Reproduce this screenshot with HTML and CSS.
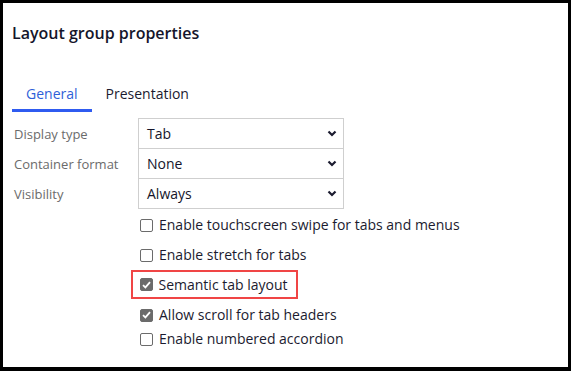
FILE: index.html
```html
<!DOCTYPE html>
<html>
<head>
<meta charset="utf-8">
<link rel="stylesheet" href="styles.css">
</head>
<body>
<div class="frame">
  <h1 class="title">Layout group properties</h1>
  <div class="tabs">
    <div class="tab active">General</div>
    <div class="tab">Presentation</div>
  </div>
  <div class="form">
    <div class="field">
      <div class="label">Display type</div>
      <div class="select"><span>Tab</span><svg class="chev" width="10" height="7" viewBox="0 0 10 7"><path d="M1.5 1.5 L5 5 L8.5 1.5" fill="none" stroke="#1b1b2f" stroke-width="2.2"/></svg></div>
    </div>
    <div class="field">
      <div class="label">Container format</div>
      <div class="select"><span>None</span><svg class="chev" width="10" height="7" viewBox="0 0 10 7"><path d="M1.5 1.5 L5 5 L8.5 1.5" fill="none" stroke="#1b1b2f" stroke-width="2.2"/></svg></div>
    </div>
    <div class="field">
      <div class="label">Visibility</div>
      <div class="select"><span>Always</span><svg class="chev" width="10" height="7" viewBox="0 0 10 7"><path d="M1.5 1.5 L5 5 L8.5 1.5" fill="none" stroke="#1b1b2f" stroke-width="2.2"/></svg></div>
    </div>
  </div>
  <div class="checks">
    <div class="check r1"><span class="box"></span><span>Enable touchscreen swipe for tabs and menus</span></div>
    <div class="check r2"><span class="box"></span><span>Enable stretch for tabs</span></div>
    <div class="check r3 highlight"><span class="box on"><svg width="9" height="8" viewBox="0 0 9 8"><path d="M1 4.2 L3.4 6.4 L8 1.2" fill="none" stroke="#fff" stroke-width="1.8"/></svg></span><span>Semantic tab layout</span></div>
    <div class="check r4"><span class="box on"><svg width="9" height="8" viewBox="0 0 9 8"><path d="M1 4.2 L3.4 6.4 L8 1.2" fill="none" stroke="#fff" stroke-width="1.8"/></svg></span><span>Allow scroll for tab headers</span></div>
    <div class="check r5"><span class="box"></span><span>Enable numbered accordion</span></div>
  </div>
</div>
</body>
</html>
```

FILE: styles.css
```css
* { box-sizing: border-box; }
html, body { margin: 0; padding: 0; background: #fff; }
body { font-family: "Open Sans", "Noto Sans", "Liberation Sans", sans-serif; color: #1b1b2f; }

.frame {
  width: 571px;
  height: 371px;
  border: 3px solid #000;
  border-bottom-width: 4px;
  padding: 20px 0 0 9px;
  overflow: hidden;
}

.title {
  margin: 0;
  font-size: 16px;
  line-height: 20px;
  font-weight: 600;
  color: #15152b;
}

.tabs {
  display: flex;
  margin-top: 41px;
}
.tab {
  font-size: 14px;
  line-height: 20px;
  padding: 0 14px 5px;
  border-bottom: 3px solid transparent;
  color: #1b1b2f;
}
.tab.active {
  color: #2f5fd8;
  border-bottom-color: #2f5bf0;
}

.form {
  margin-top: 6px;
  display: flex;
  flex-direction: column;
}
.field {
  display: flex;
  align-items: center;
  margin-bottom: -1px;
}
.label {
  width: 126px;
  padding-left: 2px;
  font-size: 13px;
  color: #6b6b6b;
}
.select {
  width: 206px;
  height: 31px;
  border: 1px solid #cfcfcf;
  display: flex;
  align-items: center;
  justify-content: space-between;
  padding: 0 6px 0 8px;
  font-size: 14px;
  color: #15152b;
}
.chev { display: block; }

.checks {
  margin-left: 125px;
  margin-top: 7px;
  display: flex;
  flex-direction: column;
}
.check {
  display: flex;
  align-items: center;
  gap: 6px;
  font-size: 14px;
  line-height: 20px;
  color: #1b1b2f;
  padding-left: 3px;
}
.r2 { margin-top: 10px; }
.r3 { margin-top: 5px; }
.r4 { margin-top: 6px; }
.r5 { margin-top: 4px; }

.highlight {
  align-self: flex-start;
  border: 2.5px solid #f04545;
  padding: 2.5px 8px 2.5px 6.5px;
  margin-left: -6px;
}

.box {
  width: 13px;
  height: 13px;
  border: 1px solid #6b6b6b;
  border-radius: 2px;
  background: #fff;
  display: flex;
  align-items: center;
  justify-content: center;
  flex: none;
}
.box.on {
  background: #6b6b6b;
}
.box svg { display: block; }
```
